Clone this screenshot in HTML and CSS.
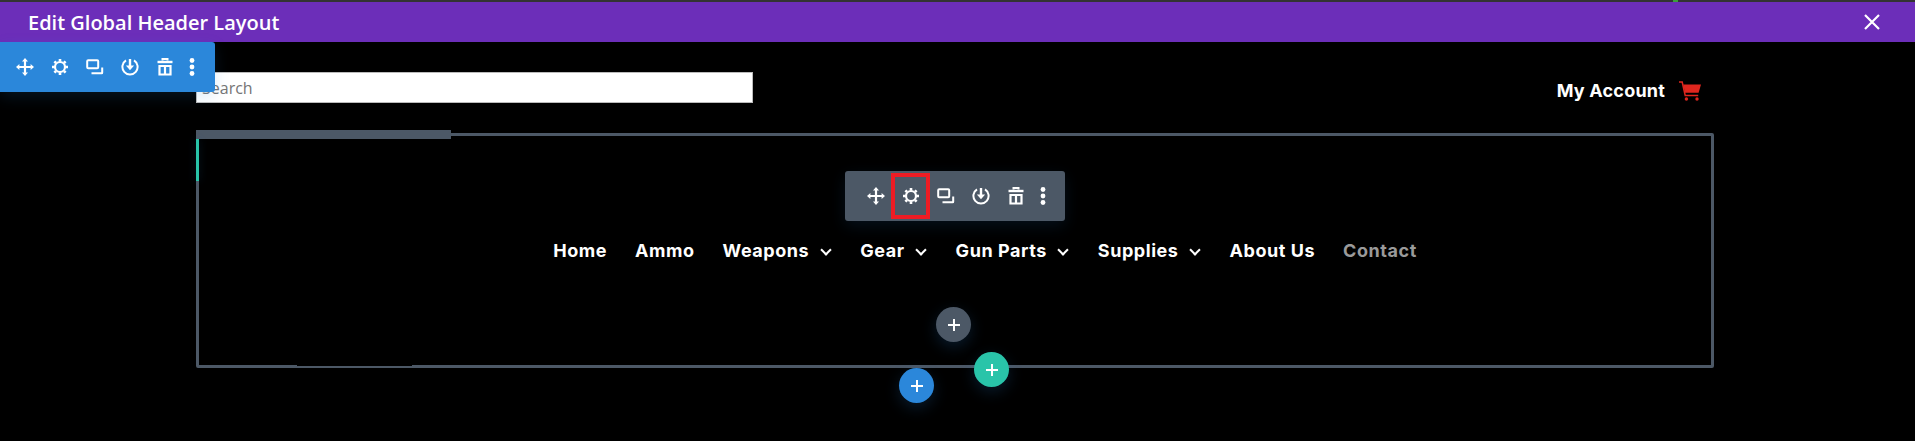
FILE: index.html
```html
<!DOCTYPE html>
<html lang="en">
<head>
    <meta charset="UTF-8">
    <meta name="viewport" content="width=device-width, initial-scale=1.0">
    <title>Edit Global Header Layout</title>
    <link rel="stylesheet" href="styles.css">
</head>
<body>
    <svg class="icon-defs" width="0" height="0">
        <symbol id="i-move" viewBox="0 0 18 18">
            <path d="M9 2v14M2 9h14" fill="none" stroke="currentColor" stroke-width="2.2"/>
            <path d="M9 0l3 3.4H6zM9 18l3-3.4H6zM0 9l3.4-3v6zM18 9l-3.4-3v6z" fill="currentColor"/>
        </symbol>
        <symbol id="i-gear" viewBox="0 0 18 18">
            <circle cx="9" cy="9" r="5" fill="none" stroke="currentColor" stroke-width="2.2"/>
            <path d="M9 3.5V1M9 17v-2.5M3.5 9H1M17 9h-2.5M5 5L3.4 3.4M14.6 14.6L13 13M5 13l-1.6 1.6M14.6 3.4L13 5" fill="none" stroke="currentColor" stroke-width="2.6"/>
        </symbol>
        <symbol id="i-copy" viewBox="0 0 18 18">
            <rect x="1.2" y="2.2" width="11" height="8" rx="1" fill="none" stroke="currentColor" stroke-width="2"/>
            <path d="M16.2 9.5v5.3a.5.5 0 0 1-.5.5H5.5" fill="none" stroke="currentColor" stroke-width="2"/>
        </symbol>
        <symbol id="i-save" viewBox="0 0 18 18">
            <path d="M5 2.4a7.6 7.6 0 1 0 8 0" fill="none" stroke="currentColor" stroke-width="2"/>
            <path d="M9 1v8" fill="none" stroke="currentColor" stroke-width="2.4"/>
            <path d="M4.9 7.4h8.2L9 12.2z" fill="currentColor"/>
        </symbol>
        <symbol id="i-trash" viewBox="0 0 18 18">
            <path d="M6.5 2.5V1h5v1.5" fill="none" stroke="currentColor" stroke-width="2"/>
            <path d="M1.5 4h15" fill="none" stroke="currentColor" stroke-width="2.4"/>
            <path d="M3.5 8h11v8.5h-11zM9 8v8.5" fill="none" stroke="currentColor" stroke-width="2.2"/>
        </symbol>
        <symbol id="i-dots" viewBox="0 0 18 18">
            <circle cx="9" cy="2.5" r="2.4" fill="currentColor"/>
            <circle cx="9" cy="9" r="2.4" fill="currentColor"/>
            <circle cx="9" cy="15.5" r="2.4" fill="currentColor"/>
        </symbol>
        <symbol id="i-plus" viewBox="0 0 12 12">
            <path d="M6 0v12M0 6h12" fill="none" stroke="currentColor" stroke-width="2"/>
        </symbol>
    </svg>

    <span class="top-marker"></span>

    <!-- title bar -->
    <div class="title-bar">
        <h1>Edit Global Header Layout</h1>
        <svg class="close-icon" viewBox="0 0 16 16"><path d="M1 1l14 14M15 1L1 15" fill="none" stroke="currentColor" stroke-width="2.2"/></svg>
    </div>

    <div class="canvas">
        <!-- section toolbar -->
        <div class="toolbar section-toolbar">
            <button class="tool"><svg><use href="#i-move"/></svg></button>
            <button class="tool"><svg><use href="#i-gear"/></svg></button>
            <button class="tool"><svg><use href="#i-copy"/></svg></button>
            <button class="tool"><svg><use href="#i-save"/></svg></button>
            <button class="tool"><svg><use href="#i-trash"/></svg></button>
            <button class="tool tool-dots"><svg><use href="#i-dots"/></svg></button>
        </div>

        <div class="top-row">
            <input class="search" type="text" placeholder="Search">
            <div class="account">
                <span>My Account</span>
                <svg class="cart" viewBox="0 0 22 20">
                    <path d="M0 1h3.2l3 13.4h13" fill="none" stroke="currentColor" stroke-width="1.5"/>
                    <path d="M4.2 3.6H22l-2.4 8.2H6z" fill="currentColor"/>
                    <circle cx="7.4" cy="18" r="1.7" fill="currentColor"/>
                    <circle cx="18" cy="18" r="1.7" fill="currentColor"/>
                </svg>
            </div>
        </div>

        <div class="row-box">
            <div class="row-tab"></div>
            <div class="row-accent"></div>
            <div class="row-notch"></div>

            <!-- row toolbar -->
            <div class="toolbar row-toolbar">
                <button class="tool"><svg><use href="#i-move"/></svg></button>
                <button class="tool tool-active"><svg><use href="#i-gear"/></svg></button>
                <button class="tool"><svg><use href="#i-copy"/></svg></button>
                <button class="tool"><svg><use href="#i-save"/></svg></button>
                <button class="tool"><svg><use href="#i-trash"/></svg></button>
                <button class="tool tool-dots"><svg><use href="#i-dots"/></svg></button>
            </div>

            <nav class="nav">
                <a href="#">Home</a>
                <a href="#">Ammo</a>
                <a href="#" class="has-sub">Weapons</a>
                <a href="#" class="has-sub">Gear</a>
                <a href="#" class="has-sub">Gun Parts</a>
                <a href="#" class="has-sub">Supplies</a>
                <a href="#">About Us</a>
                <a href="#" class="current">Contact</a>
            </nav>

            <button class="add add-module"><svg><use href="#i-plus"/></svg></button>
            <button class="add add-row"><svg><use href="#i-plus"/></svg></button>
            <button class="add add-section"><svg><use href="#i-plus"/></svg></button>
        </div>
    </div>
</body>
</html>
```
FILE: styles.css
```css
:root {
    --purple: #6c2eb9;
    --blue: #2b87da;
    --green: #29c4a9;
    --slate: #4c5866;
    --red: #ed1c24;
}

* {
    margin: 0;
    padding: 0;
    box-sizing: border-box;
}

html, body {
    height: 441px;
    overflow: hidden;
}

body {
    background: #000;
    border-top: 2px solid #333;
    color: #fff;
    font-family: "Open Sans", "Liberation Sans", sans-serif;
}

.icon-defs {
    position: absolute;
}

.top-marker {
    position: absolute;
    top: 0;
    left: 1673px;
    width: 5px;
    height: 2px;
    background: #3aa03a;
}

.title-bar {
    height: 40px;
    background: var(--purple);
    padding: 0 35px 0 28px;
    display: flex;
    align-items: center;
    justify-content: space-between;
}

.title-bar h1 {
    font-size: 20px;
    font-weight: 600;
}

.close-icon {
    width: 16px;
    height: 16px;
    color: #fff;
}

.canvas {
    position: relative;
    padding: 30px 201px 0 196px;
}

/* toolbars */
.toolbar {
    position: absolute;
    height: 50px;
    display: flex;
    align-items: center;
    z-index: 3;
}

.section-toolbar {
    top: 0;
    left: 0;
    width: 215px;
    padding-left: 7.5px;
    background: var(--blue);
    border-radius: 0 3px 3px 0;
    box-shadow: 0 5px 15px rgba(43, 135, 218, 0.15);
}

.row-toolbar {
    top: 35px;
    left: 646px;
    width: 220px;
    padding-left: 13px;
    background: var(--slate);
    border-radius: 3px;
    box-shadow: 0 5px 15px rgba(43, 135, 218, 0.12);
}

.tool {
    width: 35px;
    height: 46px;
    border: none;
    background: none;
    color: #fff;
    display: flex;
    align-items: center;
    justify-content: center;
}

.tool svg {
    width: 18px;
    height: 18px;
}

.tool-dots {
    width: 19px;
}

.tool-active {
    border: 4px solid var(--red);
    width: 39px;
    margin: 0 -2px;
}

/* header row */
.top-row {
    height: 31px;
    display: flex;
    align-items: center;
    justify-content: space-between;
}

.search {
    width: 557px;
    height: 31px;
    border: 1px solid #bbb;
    padding: 0 5px;
    font-family: "Open Sans", sans-serif;
    font-size: 16px;
}

.search::placeholder {
    color: #757575;
}

.account {
    display: flex;
    align-items: center;
    gap: 14px;
    margin-top: 6px;
    margin-right: 13px;
    font-family: Inter, "Liberation Sans", sans-serif;
    font-size: 18px;
    font-weight: 700;
    letter-spacing: 0.2px;
}

.cart {
    width: 22px;
    height: 20px;
    color: #e0261e;
}

/* row outline */
.row-box {
    position: relative;
    width: 1518px;
    height: 235px;
    margin-top: 30px;
    border: 3px solid var(--slate);
    border-radius: 2px;
    padding-top: 103px;
}

.row-tab {
    position: absolute;
    top: -6px;
    left: -3px;
    width: 255px;
    height: 9px;
    background: var(--slate);
}

.row-accent {
    position: absolute;
    top: 3px;
    left: -3px;
    width: 3px;
    height: 42px;
    background: var(--green);
    box-shadow: 0 0 8px rgba(43, 135, 218, 0.2);
}

.row-notch {
    position: absolute;
    bottom: -1px;
    left: 98px;
    width: 115px;
    height: 1px;
    background: #000;
}

/* menu */
.nav {
    display: flex;
    justify-content: center;
    gap: 28px;
    padding-left: 60px;
    font-family: Inter, "Liberation Sans", sans-serif;
    font-size: 18px;
    font-weight: 700;
    letter-spacing: 0.55px;
    line-height: 24px;
}

.nav a {
    color: #fff;
    text-decoration: none;
}

.nav a.has-sub {
    display: flex;
    align-items: center;
    gap: 10px;
}

.nav a.has-sub::after {
    content: "";
    width: 6px;
    height: 6px;
    margin: -3px 2.5px 0;
    border-right: 2px solid #fff;
    border-bottom: 2px solid #fff;
    transform: rotate(45deg);
}

.nav a.current {
    color: #9a9a9a;
}

/* add buttons */
.add {
    position: absolute;
    width: 35px;
    height: 35px;
    border: none;
    border-radius: 50%;
    color: #fff;
    display: flex;
    align-items: center;
    justify-content: center;
    box-shadow: 0 5px 15px rgba(43, 135, 218, 0.2);
    z-index: 2;
}

.add svg {
    width: 12px;
    height: 12px;
}

.add-module {
    top: 171px;
    left: 737px;
    background: var(--slate);
}

.add-row {
    top: 216px;
    left: 775px;
    background: var(--green);
}

.add-section {
    top: 232px;
    left: 700px;
    background: var(--blue);
}
```
